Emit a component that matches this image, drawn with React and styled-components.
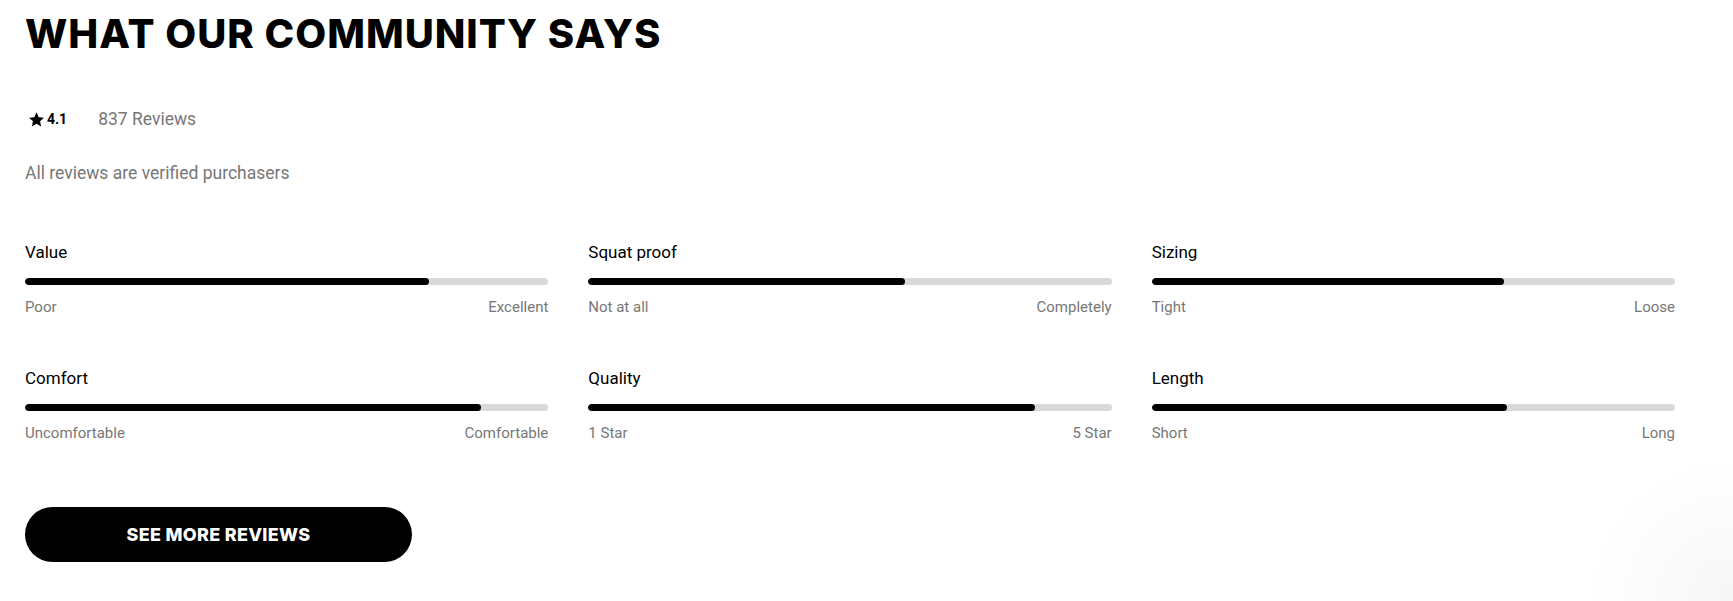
import React from 'react';
import styled, { createGlobalStyle } from 'styled-components';

const GlobalStyle = createGlobalStyle`
  html, body {
    margin: 0;
    padding: 0;
    background: #ffffff;
  }
  body {
    font-family: Roboto, "Liberation Sans", Arial, sans-serif;
    color: #000000;
  }
  * {
    box-sizing: border-box;
  }
`;

const Page = styled('div')`
  width: 100%;
  min-height: 601px;
  padding: 10px 25px 0 25px;
  background: radial-gradient(circle at 100% 100%, rgba(0, 0, 0, 0.035) 0, rgba(0, 0, 0, 0) 150px), #ffffff;
`;

const Title = styled('h1')`
  margin: 0;
  font-family: Inter, "Open Sans", sans-serif;
  font-weight: 800;
  font-size: 40px;
  line-height: 48px;
  letter-spacing: 1px;
  text-transform: uppercase;
`;

const RatingRow = styled('div')`
  display: flex;
  align-items: center;
  margin-top: 49px;
  height: 24px;
`;

const Score = styled('span')`
  display: flex;
  align-items: center;
  gap: 2px;
  font-size: 14px;
  font-weight: 700;
  padding-left: 3px;
`;

const Count = styled('span')`
  margin-left: 31px;
  font-size: 17.5px;
  color: #777777;
`;

const Verified = styled('p')`
  margin: 30px 0 0 0;
  font-size: 17.5px;
  line-height: 24px;
  color: #777777;
`;

const Grid = styled('div')`
  display: grid;
  grid-template-columns: repeat(3, 1fr);
  column-gap: 40px;
  row-gap: 49px;
  width: 1650px;
  margin-top: 55px;
`;

const Metric = styled('div')`
  display: flex;
  flex-direction: column;
`;

const MetricName = styled('div')`
  font-size: 17px;
  line-height: 24px;
  color: #000000;
`;

const Track = styled('div')`
  margin-top: 14px;
  height: 7px;
  border-radius: 4px;
  background: #d9d9d9;
  overflow: hidden;
`;

const Fill = styled('div')`
  height: 100%;
  border-radius: 4px;
  background: #000000;
`;

const Ends = styled('div')`
  display: flex;
  justify-content: space-between;
  margin-top: 12px;
  font-size: 15px;
  line-height: 20px;
  color: #777777;
`;

const Button = styled('button')`
  display: flex;
  align-items: center;
  justify-content: center;
  margin-top: 64px;
  width: 387px;
  height: 55px;
  border: none;
  border-radius: 28px;
  background: #000000;
  color: #ffffff;
  font-family: Inter, "Open Sans", sans-serif;
  font-weight: 800;
  font-size: 18px;
  letter-spacing: 0.3px;
  text-transform: uppercase;
  cursor: pointer;
`;

const Star = () => (
  <svg width="17" height="17" viewBox="0 0 24 24" aria-hidden="true">
    <path
      fill="#000"
      d="M12 1.8l3.1 6.9 7.5.8-5.6 5 1.6 7.4L12 18.1l-6.6 3.8L7 14.5l-5.6-5 7.5-.8z"
    />
  </svg>
);

const metrics = [
  { name: 'Value', low: 'Poor', high: 'Excellent', pct: 77.2 },
  { name: 'Squat proof', low: 'Not at all', high: 'Completely', pct: 60.5 },
  { name: 'Sizing', low: 'Tight', high: 'Loose', pct: 67.3 },
  { name: 'Comfort', low: 'Uncomfortable', high: 'Comfortable', pct: 87.1 },
  { name: 'Quality', low: '1 Star', high: '5 Star', pct: 85.4 },
  { name: 'Length', low: 'Short', high: 'Long', pct: 67.9 },
];

export default function App() {
  return (
    <Page>
      <GlobalStyle />
      <Title>What our community says</Title>
      <RatingRow>
        <Score>
          <Star />
          4.1
        </Score>
        <Count>837 Reviews</Count>
      </RatingRow>
      <Verified>All reviews are verified purchasers</Verified>
      <Grid>
        {metrics.map((m) => (
          <Metric key={m.name}>
            <MetricName>{m.name}</MetricName>
            <Track>
              <Fill style={{ width: `${m.pct}%` }} />
            </Track>
            <Ends>
              <span>{m.low}</span>
              <span>{m.high}</span>
            </Ends>
          </Metric>
        ))}
      </Grid>
      <Button>See more reviews</Button>
    </Page>
  );
}
